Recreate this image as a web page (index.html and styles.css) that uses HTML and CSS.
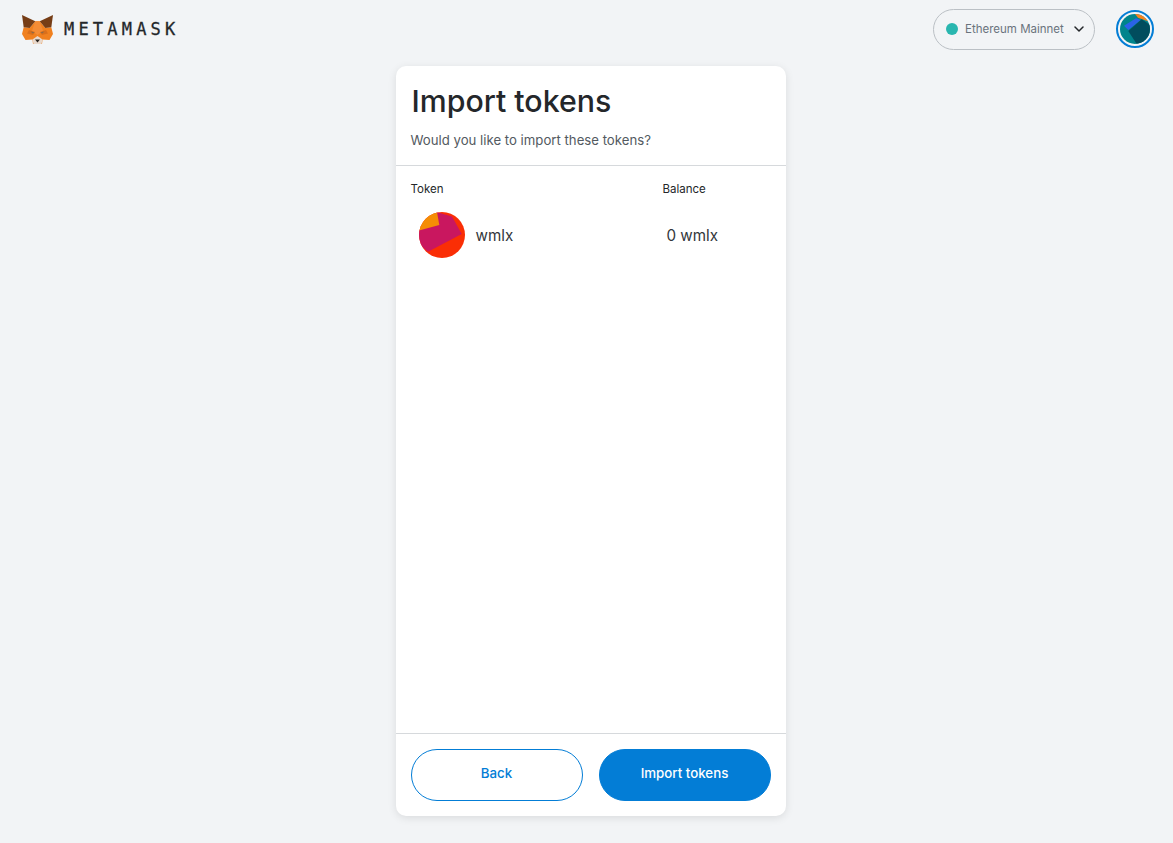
FILE: index.html
```html
<!DOCTYPE html>
<html lang="en">
<head>
<meta charset="utf-8">
<title>Import tokens</title>
<link rel="stylesheet" href="styles.css">
</head>
<body>
<header class="app-header">
  <div class="brand">
    <svg class="fox" viewBox="0 0 31 29" width="31" height="29" aria-hidden="true">
      <polygon points="1.700,12.300 7.700,13 13.300,6.300 17.700,6.300 23.300,13 29.300,12.300 31,19 27.500,25 20.500,24.500 20,29 11,29 10.500,24.500 3.500,25 0,19" fill="#f0801f"/>
      <polygon points="0,0 13.300,6.300 7.700,13 1.700,12.300" fill="#763d16"/>
      <polygon points="31,0 17.700,6.300 23.300,13 29.300,12.300" fill="#763d16"/>
      <polygon points="13.300,6.300 17.700,6.300 21,16 15.500,20 10,16" fill="#f48c36"/>
      <polygon points="7,15 13,17 11,20 5,18.500" fill="#d96f1c"/>
      <polygon points="24,15 18,17 20,20 26,18.500" fill="#d96f1c"/>
      <polygon points="8.500,16.500 12.500,17.300 10.800,18.500" fill="#8a6a4a"/>
      <polygon points="22.500,16.500 18.500,17.300 20.200,18.500" fill="#8a6a4a"/>
      <polygon points="10.500,24.500 15.500,21 20.500,24.500 19.500,29 11.500,29" fill="#e8d8cc"/>
      <polygon points="13,24.500 18,24.500 15.500,27.500" fill="#2b2622"/>
    </svg>
    <span class="wordmark">METAMASK</span>
  </div>
  <div class="header-right">
    <button class="network" type="button">
      <span class="network-dot"></span>
      <span class="network-name">Ethereum Mainnet</span>
      <svg class="chevron" viewBox="0 0 10 6" width="10" height="6" aria-hidden="true">
        <path d="M1 1l4 4 4-4" fill="none" stroke="#24272a" stroke-width="1.500" stroke-linecap="round" stroke-linejoin="round"/>
      </svg>
    </button>
    <div class="account">
      <svg viewBox="0 0 30 30" width="30" height="30" aria-hidden="true">
        <defs><clipPath id="acct"><circle cx="15" cy="15" r="15"/></clipPath></defs>
        <g clip-path="url(#acct)">
          <rect width="30" height="30" fill="#00848c"/>
          <polygon points="15,0 25,0 30,8 18,3.700" fill="#f5821f"/>
          <polygon points="4,11.700 16,4.300 20.700,6 8.300,16" fill="#2a62e8"/>
          <polygon points="8.300,17 21.700,5.300 30,11 30,31 16.700,30" fill="#014d5e"/>
        </g>
      </svg>
    </div>
  </div>
</header>
<main class="card">
  <section class="card-head">
    <h1 class="title">Import tokens</h1>
    <p class="subtitle">Would you like to import these tokens?</p>
  </section>
  <section class="card-body">
    <div class="table-row labels">
      <span class="col-token">Token</span>
      <span class="col-balance">Balance</span>
    </div>
    <div class="table-row token-row">
      <div class="col-token token-cell">
        <svg class="token-icon" viewBox="0 0 46 46" width="46" height="46" aria-hidden="true">
          <defs><clipPath id="tok"><circle cx="23" cy="23" r="23"/></clipPath></defs>
          <g clip-path="url(#tok)">
            <rect width="46" height="46" fill="#fa2e05"/>
            <polygon points="30,0 46,0 46,8" fill="#2a4fd0"/>
            <polygon points="17.500,0 33,4.500 42.700,22 9,39.700 0,32 0,18" fill="#c9175f"/>
            <polygon points="0,0 18,0 20.300,13 0,18.500" fill="#f58d05"/>
          </g>
        </svg>
        <span class="token-name">wmlx</span>
      </div>
      <span class="col-balance token-balance">0 wmlx</span>
    </div>
  </section>
  <footer class="card-foot">
    <button class="btn btn-outline" type="button">Back</button>
    <button class="btn btn-primary" type="button">Import tokens</button>
  </footer>
</main>
</body>
</html>
```
FILE: styles.css
```css
* { box-sizing: border-box; }
html, body { height: 100%; }
body {
  margin: 0;
  background: #f2f4f6;
  font-family: Inter, "Noto Sans", sans-serif;
  color: #24272a;
  display: flex;
  flex-direction: column;
  align-items: center;
  overflow: hidden;
}
.app-header {
  width: 100%;
  height: 58px;
  flex: none;
  padding: 0 19px 0 22px;
  display: flex;
  justify-content: space-between;
  align-items: flex-start;
}
.brand {
  display: flex;
  align-items: center;
  gap: 11px;
  height: 58px;
}
.fox { display: block; }
.wordmark {
  font-family: "DejaVu Sans Mono", monospace;
  font-size: 17px;
  font-weight: 400;
  letter-spacing: 4.200px;
  color: #24272a;
  -webkit-text-stroke: 0.3px #24272a;
}
.header-right {
  display: flex;
  align-items: center;
  gap: 21px;
  height: 58px;
}
.network {
  width: 162px;
  height: 41px;
  padding: 0 10px 0 12px;
  border: 1px solid #bbc0c5;
  border-radius: 21px;
  background: transparent;
  display: flex;
  align-items: center;
  font-family: inherit;
}
.network-dot {
  width: 12px;
  height: 12px;
  border-radius: 50%;
  background: #29b6af;
  flex: none;
}
.network-name {
  flex: 1;
  margin-left: 7px;
  font-size: 11.500px;
  color: #6a737d;
  text-align: left;
  white-space: nowrap;
}
.chevron { flex: none; }
.account {
  width: 38px;
  height: 38px;
  border: 2px solid #037dd6;
  border-radius: 50%;
  display: flex;
  align-items: center;
  justify-content: center;
}
.account svg { display: block; }
.card {
  width: 390px;
  height: 750px;
  margin: 8px 0 0 8px;
  flex: none;
  background: #fff;
  border-radius: 10px;
  box-shadow: 0 2px 8px rgba(0, 0, 0, 0.1);
  display: flex;
  flex-direction: column;
}
.card-head {
  height: 100px;
  flex: none;
  padding: 15px 15px 0;
  border-bottom: 1px solid #d6d9dc;
}
.title {
  margin: 0 0 0 1px;
  font-size: 30.300px;
  line-height: 40px;
  font-weight: 500;
  color: #24272a;
}
.subtitle {
  margin: 9px 0 0;
  font-size: 13.200px;
  line-height: 20px;
  color: #535a61;
}
.card-body {
  flex: 1;
  padding: 16px 15px 0;
}
.table-row { display: flex; }
.col-token { width: 252px; flex: none; }
.labels { font-size: 11.500px; line-height: 14px; color: #24272a; }
.token-row { margin-top: 16px; align-items: flex-start; }
.token-cell {
  display: flex;
  align-items: flex-start;
  gap: 11px;
  padding-left: 8px;
}
.token-icon { display: block; }
.token-name, .token-balance { font-size: 15.200px; line-height: 48px; color: #33373b; }
.token-balance { padding-left: 4px; }
.card-foot {
  height: 83px;
  flex: none;
  padding: 15px 15px 0;
  border-top: 1px solid #d6d9dc;
  display: flex;
  gap: 16px;
}
.btn {
  flex: 1;
  height: 52px;
  border-radius: 100px;
  font-family: inherit;
  font-size: 13.300px;
  font-weight: 500;
  padding: 0 0 4px;
}
.btn-outline { background: #fff; border: 1px solid #037dd6; color: #037dd6; }
.btn-primary { background: #037dd6; border: 1px solid #037dd6; color: #fff; }
```
